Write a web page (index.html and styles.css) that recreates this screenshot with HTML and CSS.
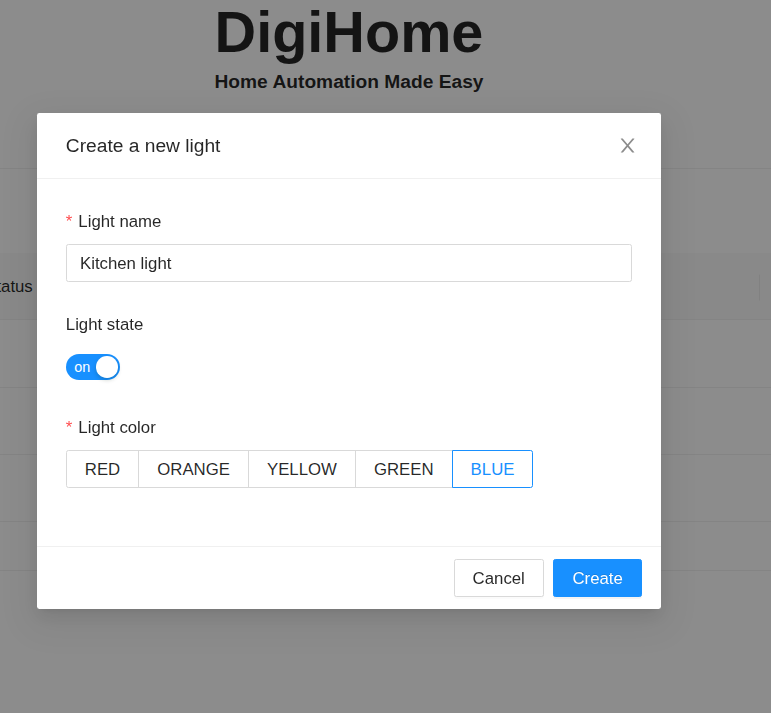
FILE: index.html
```html
<!DOCTYPE html>
<html lang="en">
<head>
<meta charset="utf-8">
<title>DigiHome</title>
<link rel="stylesheet" href="styles.css">
</head>
<body>
<div class="page">
  <header class="head">
    <h1 class="brand">DigiHome</h1>
    <h3 class="tagline">Home Automation Made Easy</h3>
  </header>
  <div class="toolbar"></div>
  <div class="table-wrap">
    <div class="table">
      <div class="trow thead">
        <div class="cell c1">Status</div>
        <div class="cell c2">Name</div>
        <div class="cell c3">Color</div>
        <div class="cell c4"></div>
      </div>
      <div class="trow r1"></div>
      <div class="trow r2"></div>
      <div class="trow r3"></div>
      <div class="trow r4"></div>
    </div>
  </div>
</div>

<div class="mask"></div>

<div class="modal" role="dialog">
  <div class="modal-header">
    <div class="modal-title">Create a new light</div>
    <button class="modal-close" aria-label="Close">
      <svg class="close-icon" viewBox="64 64 896 896" width="19" height="19" fill="currentColor" aria-hidden="true"><path d="M563.8 512l262.5-312.9c4.4-5.2.7-13.1-6.1-13.1h-79.8c-4.7 0-9.2 2.1-12.3 5.7L511.6 449.8 295.1 191.7c-3-3.6-7.5-5.7-12.3-5.7H203c-6.8 0-10.5 7.9-6.1 13.1L459.4 512 196.9 824.9A7.95 7.95 0 00203 838h79.8c4.7 0 9.2-2.1 12.3-5.7l216.5-258.1 216.5 258.1c3 3.6 7.5 5.7 12.3 5.7h79.8c6.8 0 10.5-7.9 6.1-13.1L563.8 512z"/></svg>
    </button>
  </div>
  <div class="modal-body">
    <div class="form-item">
      <div class="form-label"><span class="req">*</span>Light name</div>
      <div class="control">
        <input class="input" type="text" value="Kitchen light">
      </div>
    </div>
    <div class="form-item">
      <div class="form-label">Light state</div>
      <div class="control">
        <span class="switch"><span class="switch-inner">on</span><span class="switch-handle"></span></span>
      </div>
    </div>
    <div class="form-item">
      <div class="form-label"><span class="req">*</span>Light color</div>
      <div class="control">
        <div class="radio-group">
          <span class="rb">RED</span>
          <span class="rb">ORANGE</span>
          <span class="rb">YELLOW</span>
          <span class="rb">GREEN</span>
          <span class="rb on">BLUE</span>
        </div>
      </div>
    </div>
  </div>
  <div class="modal-footer">
    <button class="btn">Cancel</button>
    <button class="btn primary">Create</button>
  </div>
</div>
</body>
</html>
```

FILE: styles.css
```css
html, body {
  margin: 0;
  padding: 0;
}
body {
  background: #fff;
  font-family: "Liberation Sans", Arial, sans-serif;
  color: rgba(0, 0, 0, 0.85);
  width: 771px;
  height: 713px;
  overflow: hidden;
}
.page {
  width: 771px;
}
.head {
  width: 698px;
  height: 94px;
  text-align: center;
}
.brand {
  margin: 0;
  font-size: 57.6px;
  line-height: 64px;
  font-weight: 700;
}
.tagline {
  margin: 5px 0 0;
  font-size: 19.2px;
  line-height: 25px;
  font-weight: 700;
}
.toolbar {
  height: 74px;
  border-bottom: 1px solid #f0f0f0;
}
.table-wrap {
  margin-top: 84px;
  width: 771px;
  overflow: hidden;
}
.table {
  margin-left: -34px;
  width: 900px;
}
.trow {
  display: flex;
  border-bottom: 1px solid #f0f0f0;
  font-size: 16.8px;
  line-height: 26.4px;
}
.thead {
  background: #fafafa;
  height: 67px;
  box-sizing: border-box;
  padding-top: 3px;
  align-items: center;
  font-weight: 500;
}
.cell {
  position: relative;
  padding: 0 19.2px;
  box-sizing: border-box;
  white-space: nowrap;
}
.thead .cell:not(:last-child)::before {
  content: "";
  position: absolute;
  right: 0;
  top: 50%;
  width: 1px;
  height: 26.9px;
  transform: translateY(-50%);
  background: rgba(0, 0, 0, 0.06);
}
.c1 { width: 200px; }
.c2 { width: 294px; }
.c3 { width: 300px; }
.c4 { flex: 1; }
.r1 { height: 67px; }
.r2 { height: 66px; }
.r3 { height: 66px; }
.r4 { height: 48px; }

.mask {
  position: fixed;
  inset: 0;
  background: rgba(0, 0, 0, 0.45);
}

.modal {
  position: absolute;
  top: 113px;
  left: 37px;
  width: 624px;
  background: #fff;
  border-radius: 2.4px;
  box-shadow: 0 3.6px 7.2px -4.8px rgba(0, 0, 0, 0.12),
              0 7.2px 19.2px 0 rgba(0, 0, 0, 0.08),
              0 10.8px 33.6px 9.6px rgba(0, 0, 0, 0.05);
  font-size: 16.8px;
  line-height: 1.5715;
}
.modal-header {
  position: relative;
  padding: 20.2px 28.8px 18.2px;
  border-bottom: 1px solid #f0f0f0;
}
.modal-title {
  font-size: 19.2px;
  line-height: 26.4px;
  font-weight: 500;
  color: rgba(0, 0, 0, 0.85);
}
.modal-close {
  position: absolute;
  top: 0;
  right: 0;
  width: 67.2px;
  height: 65.8px;
  padding: 0;
  border: 0;
  background: transparent;
  display: flex;
  align-items: center;
  justify-content: center;
  color: rgba(0, 0, 0, 0.45);
  cursor: pointer;
}
.close-icon {
  display: block;
  width: 19.2px;
  height: 19.2px;
}
.modal-body {
  padding: 28.8px;
}
.form-item {
  margin-bottom: 28.8px;
}
.form-label {
  padding-top: 1px;
  padding-bottom: 8.6px;
  line-height: 26.4px;
  color: rgba(0, 0, 0, 0.85);
}
.req {
  color: #ff4d4f;
  margin-right: 6px;
}
.control {
  min-height: 38.4px;
  display: flex;
  align-items: center;
}
.input {
  display: block;
  width: 100%;
  height: 38.4px;
  box-sizing: border-box;
  margin: 0;
  padding: 5.8px 13.2px 3.8px;
  border: 1px solid #d9d9d9;
  border-radius: 2.4px;
  font-family: "Liberation Sans", Arial, sans-serif;
  font-size: 16.8px;
  color: rgba(0, 0, 0, 0.85);
  outline: none;
}
.switch {
  position: relative;
  display: inline-flex;
  align-items: center;
  height: 26.4px;
  min-width: 52.8px;
  margin-top: 2px;
  border-radius: 100px;
  background: #1890ff;
}
.switch-inner {
  margin: 0 30px 0 8.4px;
  color: #fff;
  font-size: 14.4px;
  font-weight: 400;
  line-height: 26.4px;
}
.switch-handle {
  position: absolute;
  top: 2.4px;
  right: 2.4px;
  width: 21.6px;
  height: 21.6px;
  border-radius: 50%;
  background: #fff;
  box-shadow: 0 2px 4px 0 rgba(0, 35, 11, 0.2);
}
.radio-group {
  display: inline-flex;
}
.rb {
  position: relative;
  height: 38.4px;
  box-sizing: border-box;
  padding: 2px 18px 0;
  line-height: 34.4px;
  border: 1px solid #d9d9d9;
  margin-left: -1px;
  background: #fff;
  color: rgba(0, 0, 0, 0.85);
  font-size: 16.8px;
}
.rb:first-child {
  margin-left: 0;
  border-radius: 2.4px 0 0 2.4px;
}
.rb:last-child {
  border-radius: 0 2.4px 2.4px 0;
}
.rb.on {
  z-index: 1;
  color: #1890ff;
  border-color: #1890ff;
}
.modal-footer {
  padding: 12px 19.2px;
  border-top: 1px solid #f0f0f0;
  display: flex;
  justify-content: flex-end;
  gap: 9.6px;
}
.btn {
  height: 38.4px;
  box-sizing: border-box;
  padding: 5.8px 18px 3.8px;
  border: 1px solid #d9d9d9;
  border-radius: 2.4px;
  background: #fff;
  color: rgba(0, 0, 0, 0.85);
  font-family: "Liberation Sans", Arial, sans-serif;
  font-size: 16.8px;
  line-height: 1.5715;
  box-shadow: 0 2px 0 rgba(0, 0, 0, 0.015);
  cursor: pointer;
}
.btn.primary {
  background: #1890ff;
  border-color: #1890ff;
  color: #fff;
  text-shadow: 0 -1px 0 rgba(0, 0, 0, 0.12);
  box-shadow: 0 2px 0 rgba(0, 0, 0, 0.045);
}
```
